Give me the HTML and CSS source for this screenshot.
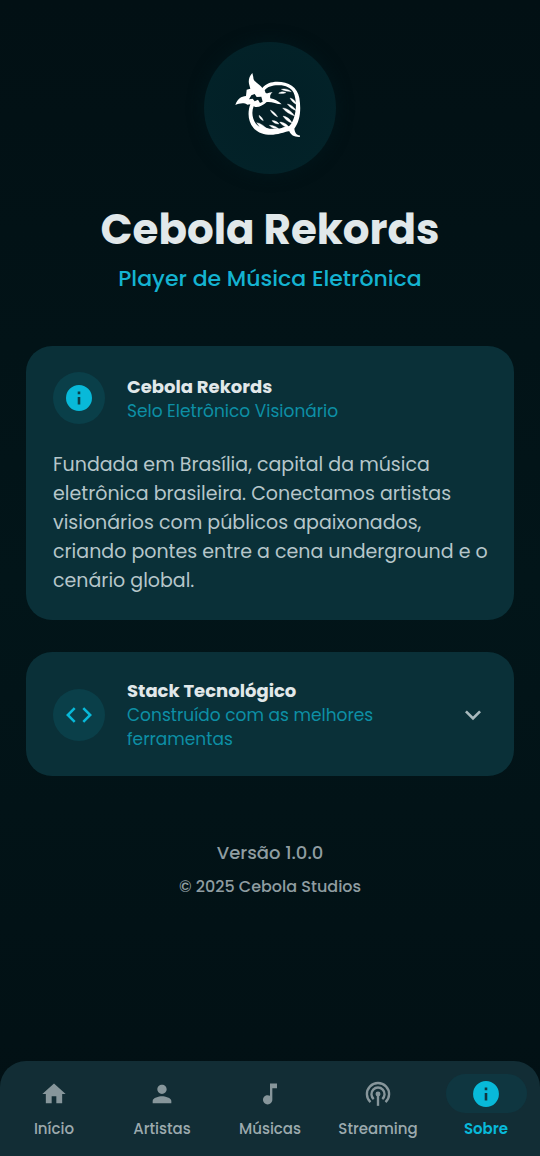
FILE: index.html
```html
<!DOCTYPE html>
<html lang="pt-BR">
<head>
<meta charset="utf-8">
<meta name="viewport" content="width=device-width, initial-scale=1">
<title>Cebola Rekords</title>
<link rel="stylesheet" href="styles.css">
</head>
<body class="app">
<main class="content">
  <header class="hero">
    <div class="logo">
      <svg class="logo-mark" viewBox="6 6 240 240" role="img" aria-label="Cebola Rekords">
        <path class="ink" d="M73 21C63 31 60 45 64 57L67 68L56 71L54 90C40 91 28 98 22 117C34 111 49 109 58 116L67 115C58 139 60 166 76 185C94 207 128 211 158 202C171 198 180 194 184 196C188 207 199 214 216 213L215 208C205 207 201 200 199 188C216 166 220 132 214 96C209 63 181 47 148 47C129 47 113 53 103 66C97 54 75 48 76 34Z"/>
        <path class="cut" d="M110 73C119 61 137 57 154 58C172 58 190 66 197 80C203 93 206 118 202 138C200 152 196 163 189 174L183 181L166 184C158 189 139 189 125 188L107 183L92 181C73 166 69 141 77 121C87 127 105 119 116 108C131 106 144 114 161 115C151 105 139 99 127 97C125 89 128 83 134 79C125 77 119 84 113 81Z"/>
        <path class="cut" d="M70 88L80 84L86 93L100 92L104 107L96 111L90 101L80 106L74 98L63 100Z"/>
        <path class="mark" d="M152 82C158 77 166 76 174 80C166 82 160 84 152 82ZM160 70C170 67 181 69 190 77C178 76 168 75 160 70ZM164 126C178 127 192 137 200 150C185 145 172 137 164 126ZM186 96C195 98 203 106 207 116C198 112 190 105 186 96ZM178 114C189 116 198 123 205 134C193 130 184 123 178 114ZM127 132C136 136 144 144 149 153C138 148 131 142 127 132ZM93 148C99 151 104 157 106 164C98 161 93 155 93 148ZM132 164C141 163 149 168 153 174C144 174 136 170 132 164ZM165 150C177 152 188 160 192 171C180 168 171 160 165 150ZM124 178C137 178 148 183 153 190C141 189 132 186 124 178ZM155 168C166 168 180 176 186 188C171 184 160 176 155 168ZM86 170C98 172 111 180 118 191L100 190Z"/>
      </svg>
    </div>
    <h1 class="title">Cebola Rekords</h1>
    <p class="subtitle">Player de Música Eletrônica</p>
  </header>

  <section class="card">
    <div class="card-head">
      <span class="badge">
        <svg class="icon-lg" viewBox="0 0 24 24" aria-hidden="true"><path d="M12 0a12 12 0 1 0 0 24 12 12 0 0 0 0-24zm1.200 18h-2.400v-7h2.400v7zm0-9.500h-2.400V6h2.400v2.500z"/></svg>
      </span>
      <div class="card-text">
        <h2 class="card-title">Cebola Rekords</h2>
        <p class="card-sub">Selo Eletrônico Visionário</p>
      </div>
    </div>
    <p class="card-body">Fundada em Brasília, capital da música eletrônica brasileira. Conectamos artistas visionários com públicos apaixonados, criando pontes entre a cena underground e o cenário global.</p>
  </section>

  <button class="card card-toggle" type="button" aria-expanded="false">
    <span class="badge">
      <svg class="icon-lg" viewBox="2 2 20 20" aria-hidden="true"><path d="M9.400 16.600 4.800 12l4.600-4.600L8 6l-6 6 6 6 1.400-1.400zm5.200 0 4.600-4.600-4.600-4.600L16 6l6 6-6 6-1.400-1.400z"/></svg>
    </span>
    <span class="card-text">
      <span class="card-title">Stack Tecnológico</span>
      <span class="card-sub">Construído com as melhores ferramentas</span>
    </span>
    <svg class="chevron" viewBox="0 0 24 24" aria-hidden="true"><path d="M7.410 8.590 12 13.170l4.590-4.580L18 10l-6 6-6-6 1.410-1.410z"/></svg>
  </button>

  <footer class="about">
    <p class="version">Versão 1.0.0</p>
    <p class="copyright">© 2025 Cebola Studios</p>
  </footer>
</main>

<nav class="tabs">
  <a class="tab" href="#inicio">
    <span class="tab-pill"><svg class="icon-tab" viewBox="0 0 24 24" aria-hidden="true"><path d="M10 20v-6h4v6h5v-8h3L12 3 2 12h3v8z"/></svg></span>
    <span class="tab-label">Início</span>
  </a>
  <a class="tab" href="#artistas">
    <span class="tab-pill"><svg class="icon-tab" viewBox="0 0 24 24" aria-hidden="true"><path d="M12 12c2.210 0 4-1.790 4-4s-1.790-4-4-4-4 1.790-4 4 1.790 4 4 4zm0 2c-2.670 0-8 1.340-8 4v2h16v-2c0-2.660-5.330-4-8-4z"/></svg></span>
    <span class="tab-label">Artistas</span>
  </a>
  <a class="tab" href="#musicas">
    <span class="tab-pill"><svg class="icon-tab" viewBox="0 0 24 24" aria-hidden="true"><path d="M12 3v10.550c-.590-.340-1.270-.550-2-.550-2.210 0-4 1.790-4 4s1.790 4 4 4 4-1.790 4-4V7h4V3h-6z"/></svg></span>
    <span class="tab-label">Músicas</span>
  </a>
  <a class="tab" href="#streaming">
    <span class="tab-pill"><svg class="icon-tab" viewBox="-1 -1 26 26" aria-hidden="true"><g class="waves"><path d="M5 19.600A10.300 10.300 0 1 1 19 19.600"/><path d="M8 16.700A6.100 6.100 0 1 1 16 16.700"/><path d="M12 12v11"/></g><circle cx="12" cy="12" r="2.300"/></svg></span>
    <span class="tab-label">Streaming</span>
  </a>
  <a class="tab tab-active" href="#sobre" aria-current="page">
    <span class="tab-pill"><svg class="icon-tab" viewBox="-1 -1 26 26" aria-hidden="true"><path d="M12 0a12 12 0 1 0 0 24 12 12 0 0 0 0-24zm1.200 18h-2.400v-7h2.400v7zm0-9.500h-2.400V6h2.400v2.500z"/></svg></span>
    <span class="tab-label">Sobre</span>
  </a>
</nav>
</body>
</html>
```

FILE: styles.css
```css
* { box-sizing: border-box; }

.app {
  margin: 0;
  min-height: 100vh;
  display: flex;
  flex-direction: column;
  background: linear-gradient(#021014, #021519 50%, #021014);
  color: #e1e8ea;
  font-family: Poppins, Inter, "Open Sans", sans-serif;
}

h1, h2, p { margin: 0; }

.content {
  flex: 1;
  display: flex;
  flex-direction: column;
  gap: 32px;
  padding: 42px 26px 32px;
}

.hero {
  display: flex;
  flex-direction: column;
  align-items: center;
  text-align: center;
  margin-bottom: 16px;
}

.logo {
  display: grid;
  place-items: center;
  width: 132px;
  height: 132px;
  margin-bottom: 26px;
  border-radius: 50%;
  background: radial-gradient(#021f26, #032329);
  box-shadow: 0 0 16px #02171c;
}

.logo-mark { width: 80px; height: 80px; }
.ink { fill: #fff; }
.cut { fill: #032027; }
.mark { fill: #fff; stroke: #fff; stroke-width: 1; }

.title {
  font-size: 42px;
  line-height: 60px;
  font-weight: 700;
}

.subtitle {
  font-size: 22px;
  line-height: 38px;
  font-weight: 500;
  color: #14b3d1;
}

.card {
  display: flex;
  flex-direction: column;
  gap: 26px;
  padding: 26px 25px 25px 27px;
  border: 0;
  border-radius: 26px;
  background: #0a3038;
  color: inherit;
  font: inherit;
  text-align: left;
}

.card-head, .card-toggle {
  display: flex;
  flex-direction: row;
  align-items: center;
  gap: 22px;
}

.badge {
  flex: none;
  display: grid;
  place-items: center;
  width: 52px;
  height: 52px;
  border-radius: 50%;
  background: #0a3f49;
}

.icon-lg { width: 26px; height: 26px; fill: #08b9d9; }

.card-text {
  flex: 1;
  display: flex;
  flex-direction: column;
  padding-top: 1px;
}

.card-title {
  font-size: 18px;
  line-height: 24px;
  font-weight: 700;
}

.card-sub {
  max-width: 300px;
  font-size: 17px;
  line-height: 24px;
  font-weight: 400;
  color: #0d8fa5;
}

.card-body {
  font-size: 19px;
  line-height: 29px;
  color: #b6c6ca;
}

.chevron {
  flex: none;
  width: 32px;
  height: 32px;
  fill: #a9b9bd;
}

.about {
  margin-top: 28px;
  text-align: center;
  color: #8f9da1;
}

.version { font-size: 18px; line-height: 34px; font-weight: 500; }
.copyright { font-size: 16px; line-height: 34px; font-weight: 500; }

.tabs {
  display: flex;
  padding: 13px 0 17px;
  border-radius: 26px 26px 0 0;
  background: #122d35;
}

.tab {
  flex: 1;
  display: flex;
  flex-direction: column;
  align-items: center;
  gap: 5px;
  color: #9caaae;
  text-decoration: none;
}

.tab-pill {
  display: grid;
  place-items: center;
  width: 75%;
  height: 39px;
  border-radius: 20px;
}

.icon-tab { width: 28px; height: 28px; fill: #87969b; }
.waves { fill: none; stroke: #87969b; stroke-width: 2.2; }

.tab-label {
  font-size: 15px;
  line-height: 21px;
  font-weight: 500;
}

.tab-active { color: #08b9d9; }
.tab-active .tab-pill { background: #0f3640; }
.tab-active .icon-tab { fill: #08b9d9; }
.tab-active .tab-label { font-weight: 600; }
```
